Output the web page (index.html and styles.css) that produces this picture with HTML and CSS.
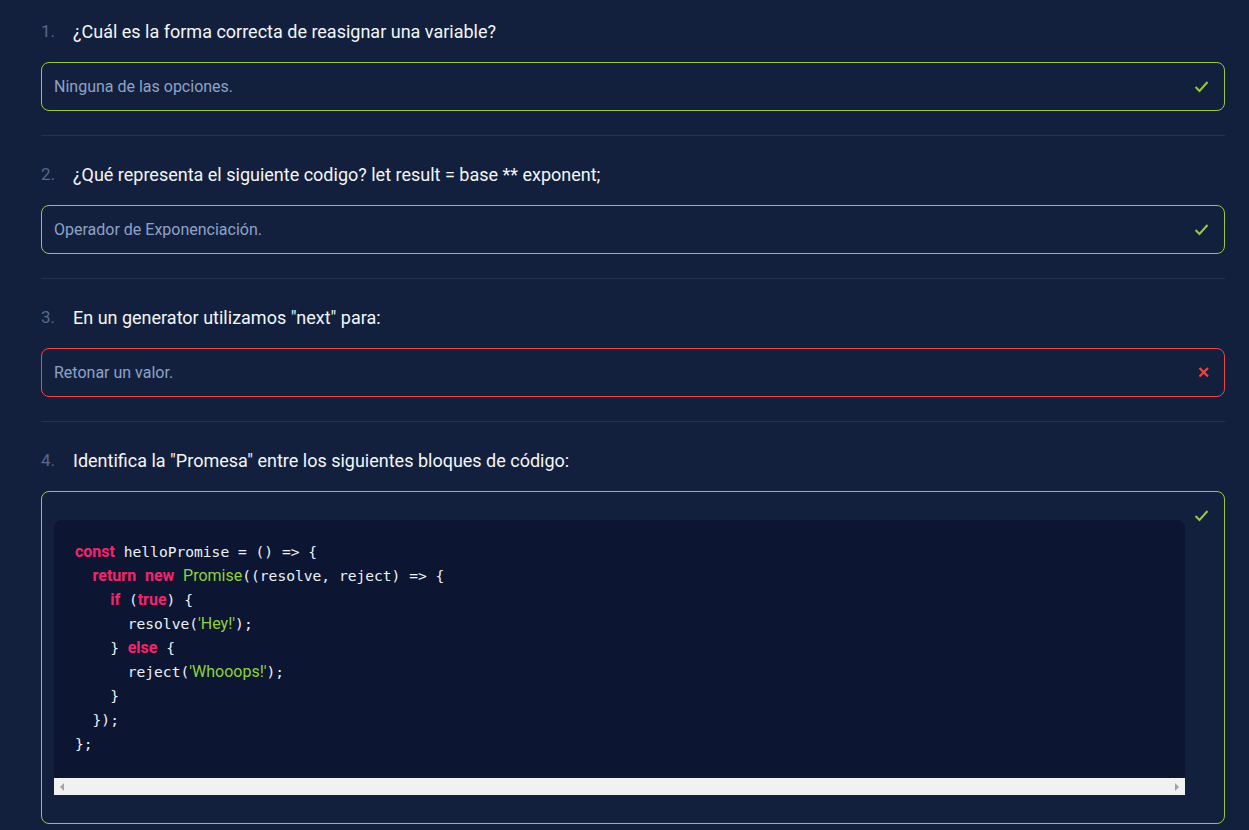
FILE: index.html
```html
<!DOCTYPE html>
<html lang="es">
<head>
<meta charset="utf-8">
<title>Quiz</title>
<link rel="stylesheet" href="styles.css">
</head>
<body>
<ol class="quiz">
  <li class="item">
    <div class="question"><span class="num">1.</span><span class="qtext">¿Cuál es la forma correcta de reasignar una variable?</span></div>
    <div class="answer correct">
      <div class="answer-body">Ninguna de las opciones.</div>
      <div class="icon"><svg width="15" height="13" viewBox="0 0 15 13"><path d="M1.5 7 L5.5 11 L13.5 2" fill="none" stroke="#98c93c" stroke-width="2"/></svg></div>
    </div>
  </li>
  <li class="item">
    <div class="question"><span class="num">2.</span><span class="qtext">¿Qué representa el siguiente codigo? let result = base ** exponent;</span></div>
    <div class="answer correct">
      <div class="answer-body">Operador de Exponenciación.</div>
      <div class="icon"><svg width="15" height="13" viewBox="0 0 15 13"><path d="M1.5 7 L5.5 11 L13.5 2" fill="none" stroke="#98c93c" stroke-width="2"/></svg></div>
    </div>
  </li>
  <li class="item">
    <div class="question"><span class="num">3.</span><span class="qtext">En un generator utilizamos "next" para:</span></div>
    <div class="answer wrong">
      <div class="answer-body">Retonar un valor.</div>
      <div class="icon"><svg width="15" height="13" viewBox="0 0 15 13"><path d="M5.5 2 L14 10.5 M14 2 L5.5 10.5" fill="none" stroke="#ef4444" stroke-width="2.2"/></svg></div>
    </div>
  </li>
  <li class="item">
    <div class="question"><span class="num">4.</span><span class="qtext">Identifica la "Promesa" entre los siguientes bloques de código:</span></div>
    <div class="answer correct">
      <div class="answer-body">
        <div class="code-wrap">
<pre class="code"><span class="kw">const</span> helloPromise = () =&gt; {
  <span class="kw">return</span> <span class="kw">new</span> <span class="cls">Promise</span>((resolve, reject) =&gt; {
    <span class="kw">if</span> (<span class="kw">true</span>) {
      resolve(<span class="str">'Hey!'</span>);
    } <span class="kw">else</span> {
      reject(<span class="str">'Whooops!'</span>);
    }
  });
};</pre>
          <div class="scrollbar">
            <span class="arrow left"></span>
            <span class="arrow right"></span>
          </div>
        </div>
      </div>
      <div class="icon"><svg width="15" height="13" viewBox="0 0 15 13"><path d="M1.5 7 L5.5 11 L13.5 2" fill="none" stroke="#98c93c" stroke-width="2"/></svg></div>
    </div>
  </li>
</ol>
</body>
</html>
```
FILE: styles.css
```css
html, body {
  margin: 0;
  padding: 0;
  background: #13203d;
}
body {
  font-family: Roboto, "Liberation Sans", sans-serif;
  color: #f1f5f9;
  padding: 0 24px 0 41px;
}
.quiz {
  list-style: none;
  margin: 0;
  padding: 0;
}
.item {
  padding: 25px 0 24px;
  border-bottom: 1px solid #24324f;
}
.item:first-child {
  padding-top: 18px;
}
.question {
  display: flex;
  align-items: center;
  height: 26px;
  margin-bottom: 18px;
  font-size: 18px;
}
.num {
  width: 32px;
  color: #56688c;
  font-size: 17px;
}
.qtext {
  color: #f3f6fb;
}
.answer {
  display: flex;
  align-items: flex-start;
  gap: 9px;
  border: 1px solid #98c93c;
  border-radius: 8px;
  padding: 12px 15px 12px 12px;
}
.answer.wrong {
  border-color: #ef4444;
}
.answer-body {
  flex: 1;
  min-width: 0;
  font-size: 16px;
  line-height: 23px;
  color: #8ea2c7;
}
.icon {
  width: 15px;
  height: 23px;
  display: flex;
  align-items: center;
  flex-shrink: 0;
}
.code-wrap {
  margin: 16px 0;
  background: #0c1531;
  border-radius: 8px 8px 0 0;
}
.code {
  margin: 0;
  padding: 20px 21px 22px;
  font-family: "DejaVu Sans Mono", monospace;
  font-size: 14.6px;
  line-height: 24px;
  color: #eef2f8;
}
.kw {
  font-family: Roboto, "Liberation Sans", sans-serif;
  font-weight: 700;
  font-size: 16px;
  color: #f5246b;
}
.cls {
  font-family: Roboto, "Liberation Sans", sans-serif;
  font-size: 16px;
  color: #8fd23a;
}
.str {
  font-family: Roboto, "Liberation Sans", sans-serif;
  font-size: 16px;
  color: #8fd23a;
}
.scrollbar {
  height: 17px;
  background: #f1f1f1;
  display: flex;
  align-items: center;
  justify-content: space-between;
  padding: 0 6px;
}
.arrow {
  width: 0;
  height: 0;
  border-top: 4px solid transparent;
  border-bottom: 4px solid transparent;
}
.arrow.left {
  border-right: 4px solid #a3a3a3;
}
.arrow.right {
  border-left: 4px solid #a3a3a3;
}
```
